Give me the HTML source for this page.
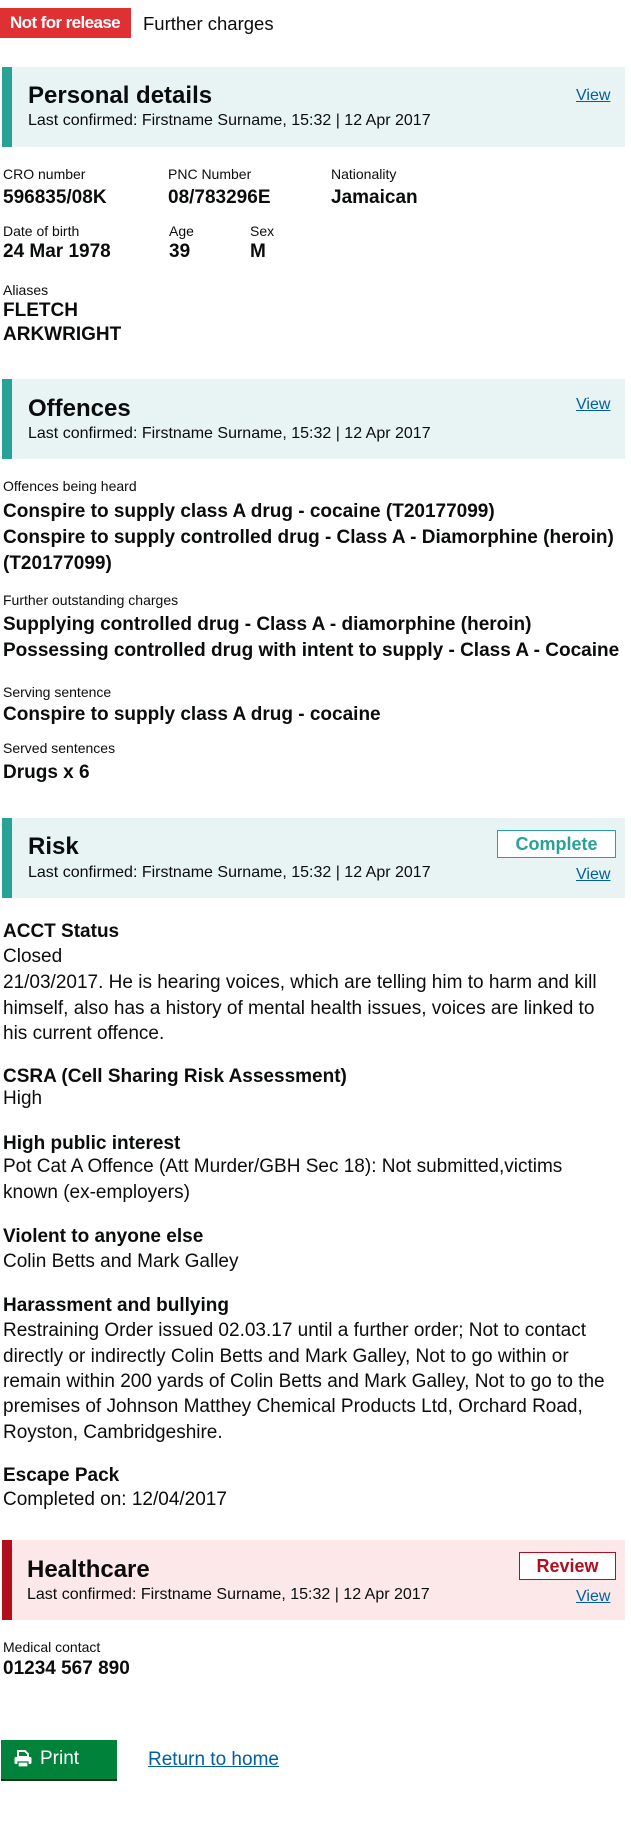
<!DOCTYPE html>
<html><head><meta charset="utf-8"><style>
*{margin:0;padding:0;box-sizing:border-box}
body{width:631px;height:1821px;background:#fff;font-family:"Liberation Sans",Arial,sans-serif;color:#0b0c0c;position:relative;overflow:hidden}
.a{position:absolute;white-space:nowrap;line-height:1}
.panel{position:absolute;left:2px;width:623px;height:80px;background:#e8f4f4;border-left:10px solid #28a197}
.h{font-size:24px;font-weight:bold}
.lc{font-size:16px;color:#0b0c0c}
.view{font-size:16px;color:#005ea5;text-decoration:underline}
.lb{font-size:14px}
.v{font-size:19px;font-weight:bold}
.t{font-size:19px}
.tb{font-size:19px;font-weight:bold}
</style></head><body>
<div class="a" style="left:0;top:8px;width:131px;height:30px;background:#df3034;color:#fff;font-weight:bold;font-size:17px;line-height:30px;padding-left:10px;letter-spacing:-0.6px;">Not for release</div>
<div class="a" style="left:143px;top:15px;font-size:18.5px">Further charges</div>

<div class="panel" style="top:67px"></div>
<div class="a h" style="left:28px;top:84px">Personal details</div>
<div class="a lc" style="left:28px;top:113px">Last confirmed: Firstname Surname, 15:32 | 12 Apr 2017</div>
<div class="a view" style="left:576px;top:88px">View</div>

<div class="a lb" style="left:3px;top:167px">CRO number</div>
<div class="a v" style="left:3px;top:188px">596835/08K</div>
<div class="a lb" style="left:168px;top:167px">PNC Number</div>
<div class="a v" style="left:168px;top:188px">08/783296E</div>
<div class="a lb" style="left:331px;top:167px">Nationality</div>
<div class="a v" style="left:331px;top:188px">Jamaican</div>
<div class="a lb" style="left:3px;top:224px">Date of birth</div>
<div class="a v" style="left:3px;top:242px">24 Mar 1978</div>
<div class="a lb" style="left:169px;top:224px">Age</div>
<div class="a v" style="left:169px;top:242px">39</div>
<div class="a lb" style="left:250px;top:224px">Sex</div>
<div class="a v" style="left:250px;top:242px">M</div>
<div class="a lb" style="left:3px;top:283px">Aliases</div>
<div class="a v" style="left:3px;top:301px">FLETCH</div>
<div class="a v" style="left:3px;top:325px">ARKWRIGHT</div>

<div class="panel" style="top:379px"></div>
<div class="a h" style="left:28px;top:397px">Offences</div>
<div class="a lc" style="left:28px;top:426px">Last confirmed: Firstname Surname, 15:32 | 12 Apr 2017</div>
<div class="a view" style="left:576px;top:397px">View</div>

<div class="a lb" style="left:3px;top:479px">Offences being heard</div>
<div class="a v" style="left:3px;top:502px">Conspire to supply class A drug - cocaine (T20177099)</div>
<div class="a v" style="left:3px;top:528px">Conspire to supply controlled drug - Class A - Diamorphine (heroin)</div>
<div class="a v" style="left:3px;top:554px">(T20177099)</div>
<div class="a lb" style="left:3px;top:593px">Further outstanding charges</div>
<div class="a v" style="left:3px;top:615px">Supplying controlled drug - Class A - diamorphine (heroin)</div>
<div class="a v" style="left:3px;top:641px">Possessing controlled drug with intent to supply - Class A - Cocaine</div>
<div class="a lb" style="left:3px;top:685px">Serving sentence</div>
<div class="a v" style="left:3px;top:705px">Conspire to supply class A drug - cocaine</div>
<div class="a lb" style="left:3px;top:741px">Served sentences</div>
<div class="a v" style="left:3px;top:763px">Drugs x 6</div>

<div class="panel" style="top:818px"></div>
<div class="a h" style="left:28px;top:835px">Risk</div>
<div class="a lc" style="left:28px;top:865px">Last confirmed: Firstname Surname, 15:32 | 12 Apr 2017</div>
<div class="a" style="left:497px;top:830px;width:119px;height:28px;border:1px solid #28a197;background:#fff;color:#28a197;font-weight:bold;font-size:18px;line-height:26px;text-align:center">Complete</div>
<div class="a view" style="left:576px;top:867px">View</div>

<div class="a tb" style="left:3px;top:922px">ACCT Status</div>
<div class="a t" style="left:3px;top:947px">Closed</div>
<div class="a t" style="left:3px;top:973px">21/03/2017. He is hearing voices, which are telling him to harm and kill</div>
<div class="a t" style="left:3px;top:999px">himself, also has a history of mental health issues, voices are linked to</div>
<div class="a t" style="left:3px;top:1024px">his current offence.</div>
<div class="a tb" style="left:3px;top:1067px">CSRA (Cell Sharing Risk Assessment)</div>
<div class="a t" style="left:3px;top:1089px">High</div>
<div class="a tb" style="left:3px;top:1134px">High public interest</div>
<div class="a t" style="left:3px;top:1157px">Pot Cat A Offence (Att Murder/GBH Sec 18): Not submitted,victims</div>
<div class="a t" style="left:3px;top:1183px">known (ex-employers)</div>
<div class="a tb" style="left:3px;top:1227px">Violent to anyone else</div>
<div class="a t" style="left:3px;top:1252px">Colin Betts and Mark Galley</div>
<div class="a tb" style="left:3px;top:1296px">Harassment and bullying</div>
<div class="a t" style="left:3px;top:1321px">Restraining Order issued 02.03.17 until a further order; Not to contact</div>
<div class="a t" style="left:3px;top:1347px">directly or indirectly Colin Betts and Mark Galley, Not to go within or</div>
<div class="a t" style="left:3px;top:1372px">remain within 200 yards of Colin Betts and Mark Galley, Not to go to the</div>
<div class="a t" style="left:3px;top:1397px">premises of Johnson Matthey Chemical Products Ltd, Orchard Road,</div>
<div class="a t" style="left:3px;top:1423px">Royston, Cambridgeshire.</div>
<div class="a tb" style="left:3px;top:1466px">Escape Pack</div>
<div class="a t" style="left:3px;top:1490px">Completed on: 12/04/2017</div>

<div class="panel" style="top:1540px;background:#fce8e9;border-left-color:#b10e1e"></div>
<div class="a h" style="left:27px;top:1558px">Healthcare</div>
<div class="a lc" style="left:27px;top:1587px">Last confirmed: Firstname Surname, 15:32 | 12 Apr 2017</div>
<div class="a" style="left:519px;top:1552px;width:97px;height:28px;border:1px solid #b10e1e;background:#fff;color:#b10e1e;font-weight:bold;font-size:18px;line-height:26px;text-align:center">Review</div>
<div class="a view" style="left:576px;top:1589px">View</div>

<div class="a lb" style="left:3px;top:1640px">Medical contact</div>
<div class="a v" style="left:3px;top:1659px">01234 567 890</div>

<div class="a" style="left:1px;top:1740px;width:116px;height:39px;background:#00823b;box-shadow:0 2px 0 #003618;color:#fff;font-size:19px;line-height:38px;padding-left:39px">Print</div>
<svg class="a" style="left:14px;top:1750px" width="18" height="18" viewBox="0 0 18 18"><path d="M4 1h7l3 3v3H4z" fill="none" stroke="#fff" stroke-width="2"/><rect x="0.5" y="7" width="17" height="7" rx="1.5" fill="#fff"/><rect x="4" y="12" width="10" height="5" fill="#fff" stroke="#00823b" stroke-width="1.3"/></svg>
<div class="a view" style="left:148px;top:1750px;font-size:19px">Return to home</div>
</body></html>
